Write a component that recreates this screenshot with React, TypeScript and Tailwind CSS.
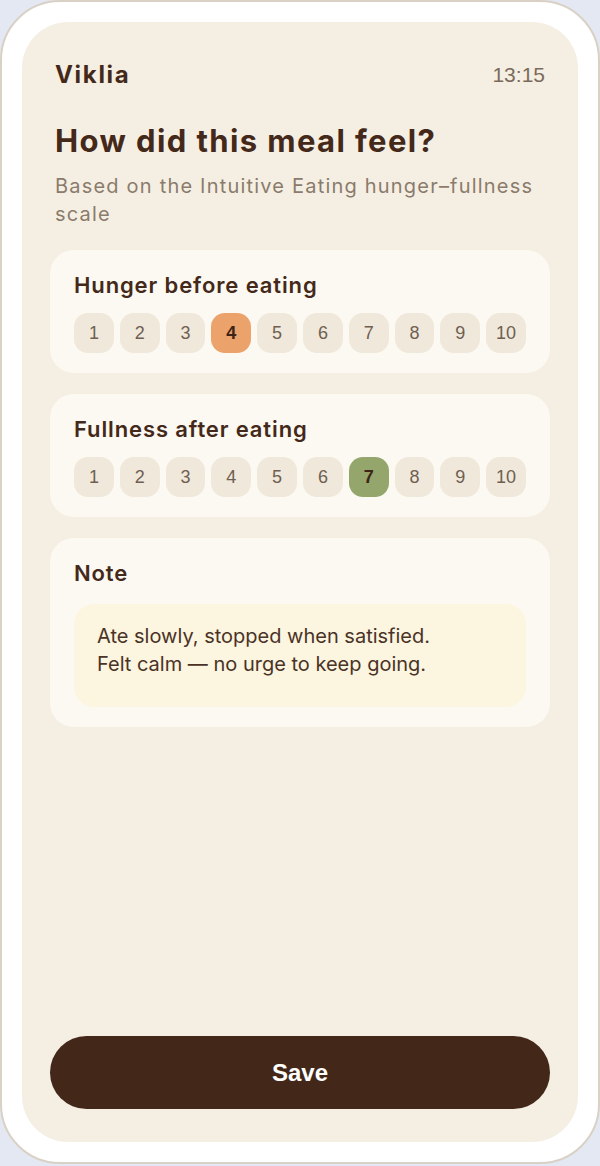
import { useState } from 'react';

const sans = { fontFamily: 'Inter, "Noto Sans", sans-serif' };
const arial = { fontFamily: '"Liberation Sans", Arial, sans-serif' };

interface ScaleProps {
  title: string;
  value: number;
  onChange: (v: number) => void;
  activeClass: string;
}

function ScaleCard({ title, value, onChange, activeClass }: ScaleProps) {
  return (
    <div className="rounded-[24px] bg-[#fcf9f2] px-6 pt-[21px] pb-5">
      <h2 className="text-[22px] leading-[28px] font-semibold tracking-[0.04em] text-[#44291a]" style={sans}>
        {title}
      </h2>
      <div className="mt-[14px] flex gap-[6px]">
        {Array.from({ length: 10 }, (_, i) => i + 1).map((n) => (
          <button
            key={n}
            onClick={() => onChange(n)}
            style={arial}
            className={
              n === value
                ? `w-10 h-10 rounded-[14px] text-[18px] font-bold text-[#3d2416] ${activeClass}`
                : 'w-10 h-10 rounded-[14px] text-[18px] bg-[#efe8db] text-[#6f5f51]'
            }
          >
            {n}
          </button>
        ))}
      </div>
    </div>
  );
}

export default function App() {
  const [hunger, setHunger] = useState(4);
  const [fullness, setFullness] = useState(7);

  return (
    <div className="w-[600px] h-[1166px] bg-[#e4e8f2]">
      <div className="w-[600px] h-[1164px] rounded-[60px] border-2 border-[#d9d1c5] bg-white p-5">
        <div className="h-full rounded-[46px] bg-[#f5efe3] px-7 pt-[39px] pb-[33px] flex flex-col">
          {/* Header */}
          <div className="flex items-center justify-between px-[5px] h-7">
            <span className="text-[24px] font-bold tracking-[0.07em] text-[#44291a]" style={sans}>
              Viklia
            </span>
            <span className="text-[21px] text-[#7b6a5b]" style={arial}>
              13:15
            </span>
          </div>

          <h1
            className="mt-[34px] px-[5px] text-[31px] leading-[36px] font-bold tracking-[0.045em] text-[#44291a]"
            style={sans}
          >
            How did this meal feel?
          </h1>
          <p
            className="mt-[13px] px-[5px] text-[20px] leading-[28px] tracking-[0.06em] text-[#8a7b6c]"
            style={sans}
          >
            Based on the Intuitive Eating hunger–fullness scale
          </p>

          <div className="mt-[22px] flex flex-col gap-[21px]">
            <ScaleCard title="Hunger before eating" value={hunger} onChange={setHunger} activeClass="bg-[#eba26b]" />
            <ScaleCard title="Fullness after eating" value={fullness} onChange={setFullness} activeClass="bg-[#94a66b]" />

            <div className="rounded-[24px] bg-[#fcf9f2] px-6 pt-[21px] pb-5">
              <h2 className="text-[22px] leading-[28px] font-semibold tracking-[0.04em] text-[#44291a]" style={sans}>
                Note
              </h2>
              <div className="mt-[17px] rounded-[20px] bg-[#fcf5df] px-[23px] pt-[18px] pb-[29px]">
                <p className="text-[20px] leading-[28px] text-[#4a3326]" style={sans}>
                  Ate slowly, stopped when satisfied.
                  <br />
                  Felt calm — no urge to keep going.
                </p>
              </div>
            </div>
          </div>

          <div className="flex-1" />

          <button
            className="h-[73px] w-full rounded-full bg-[#43281a] text-white text-[24px] font-bold"
            style={arial}
          >
            Save
          </button>
        </div>
      </div>
    </div>
  );
}
